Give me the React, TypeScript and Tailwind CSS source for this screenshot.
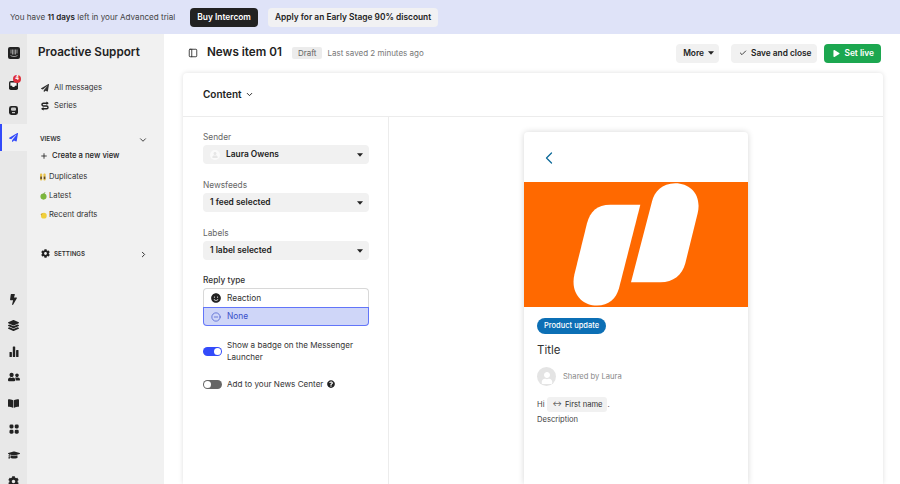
import { Check, ChevronDown, ChevronLeft, ChevronRight, CircleMinus, PanelLeft, Plus } from 'lucide-react';
import {
  FaBolt,
  FaBookOpen,
  FaCog,
  FaGraduationCap,
  FaLayerGroup,
  FaPaperPlane,
  FaPlay,
  FaQuestionCircle,
  FaSmile,
  FaUserFriends,
  FaUser,
} from 'react-icons/fa';

function BarsIcon() {
  return (
    <svg width="10" height="11" viewBox="0 0 10 11" fill="#222">
      <rect x="0.5" y="6" width="2.4" height="5" rx="0.6" />
      <rect x="3.8" y="0.5" width="2.4" height="10.5" rx="0.6" />
      <rect x="7.1" y="4" width="2.4" height="7" rx="0.6" />
    </svg>
  );
}

function DotsIcon() {
  return (
    <svg width="10" height="10" viewBox="0 0 10 10" fill="#222">
      <rect x="0.5" y="0.5" width="4" height="4" rx="1.4" />
      <rect x="5.7" y="0.5" width="4" height="4" rx="1.4" />
      <rect x="0.5" y="5.7" width="4" height="4" rx="1.4" />
      <rect x="5.7" y="5.7" width="4" height="4" rx="1.4" />
    </svg>
  );
}

const railBottom = [
  <FaBolt size={11} />,
  <FaLayerGroup size={11} />,
  <BarsIcon />,
  <FaUserFriends size={12} />,
  <FaBookOpen size={11} />,
  <DotsIcon />,
  <FaGraduationCap size={12} />,
  <FaCog size={11} />,
];

function Caret() {
  return (
    <svg width="6" height="4" viewBox="0 0 6 4" className="shrink-0">
      <path d="M0 .3h6L3 3.7z" fill="#222" />
    </svg>
  );
}

function Select({ label, value, avatar }: { label: string; value: string; avatar?: boolean }) {
  return (
    <div className="flex flex-col gap-[2px]">
      <span className="text-[8.3px] leading-[12px] text-[#666]">{label}</span>
      <div className="flex h-[19px] items-center rounded-[4px] bg-[#f1f1f1] pl-[7px] pr-[6px]">
        {avatar && (
          <span className="mr-[6px] flex h-[10px] w-[10px] items-center justify-center rounded-full bg-[#fafafa]">
            <FaUser size={6} className="text-[#e6e6e6]" />
          </span>
        )}
        <span className="flex-1 text-[8.4px] font-semibold text-[#222]">{value}</span>
        <Caret />
      </div>
    </div>
  );
}

function SeriesIcon() {
  return (
    <svg width="8" height="10" viewBox="0 0 10 11" fill="none" stroke="#222" strokeWidth="1.8">
      <path d="M8.5 2H3a1.7 1.7 0 0 0 0 3.5h4A1.7 1.7 0 0 1 7 9H1" />
      <path d="M7 .3 9.3 2 7 3.7zM3 7.3.7 9 3 10.7z" fill="#222" strokeWidth="0.5" />
    </svg>
  );
}

function ViewEmoji({ kind }: { kind: 'duo' | 'apple' | 'lemon' }) {
  if (kind === 'duo') {
    return (
      <svg width="6" height="8" viewBox="0 0 7 9">
        <rect x="0" y="0.5" width="2.6" height="8" rx="1" fill="#e8c24a" />
        <rect x="4" y="0.5" width="2.6" height="8" rx="1" fill="#e8c24a" />
        <rect x="0.4" y="4" width="1.8" height="3" fill="#5b4630" />
        <rect x="4.4" y="4" width="1.8" height="3" fill="#5b4630" />
      </svg>
    );
  }
  if (kind === 'apple') {
    return (
      <svg width="7" height="8" viewBox="0 0 8 9">
        <circle cx="4" cy="5.2" r="3.5" fill="#7bb63c" />
        <path d="M4 2 6 .5" stroke="#5d8a2c" strokeWidth="1" />
      </svg>
    );
  }
  return (
    <svg width="7" height="7" viewBox="0 0 8 8">
      <circle cx="4.4" cy="4.2" r="3.3" fill="#f0cf3c" />
      <path d="M.5 2.5 3 1 2 4z" fill="#c9a336" />
    </svg>
  );
}

export default function App() {
  return (
    <div className="flex h-[484px] w-[900px] flex-col overflow-hidden bg-white font-['Inter',sans-serif] text-[#222]">
      <div className="flex h-[34px] shrink-0 items-center bg-[#dfe3f8] pl-[10px]">
        <span className="text-[8.1px] text-[#444]">
          You have <b className="font-semibold text-[#222]">11 days</b> left in your Advanced trial
        </span>
        <span className="ml-[15px] flex h-[19px] items-center rounded-[4px] bg-[#222] px-[7px] text-[8.4px] font-semibold text-white">
          Buy Intercom
        </span>
        <span className="ml-[10px] flex h-[19px] items-center rounded-[4px] bg-[#f1f1f3] px-[7px] text-[8.4px] font-semibold text-[#222]">
          Apply for an Early Stage 90% discount
        </span>
      </div>

      <div className="flex min-h-0 flex-1">
        <div className="flex w-[27px] shrink-0 flex-col items-center bg-[#e8e8e8]">
          <svg width="12" height="12" viewBox="0 0 12 12" className="mt-[13px] shrink-0">
            <rect width="12" height="12" rx="2" fill="#222" />
            <path d="M3 2.5v4M4.5 2.5v5M6 2.5v5M7.5 2.5v5M9 2.5v4M2.5 8.5c2 1.4 5 1.4 7 0" stroke="#e8e8e8" strokeWidth=".6" fill="none" />
          </svg>
          <div className="relative mt-[22px] shrink-0">
            <svg width="9" height="9" viewBox="0 0 9 9" className="block">
              <rect x="0" y="0" width="9" height="9" rx="1.8" fill="#222" />
              <path d="M1.4 1.4h6.2v3.4H6L5.4 6H3.6L3 4.8H1.4z" fill="#f4f4f4" />
            </svg>
            <span className="absolute -right-[3px] -top-[6px] flex h-[8px] w-[8px] items-center justify-center rounded-full bg-[#dc2f3c] text-[5.5px] font-bold leading-none text-white">
              4
            </span>
          </div>
          <svg width="9" height="9" viewBox="0 0 9 9" className="mt-[16px] shrink-0">
            <rect width="9" height="9" rx="2.4" fill="#222" />
            <rect x="2" y="1.6" width="5" height="3.2" rx="1.2" fill="#c9c9c9" />
            <rect x="3" y="6" width="3" height="1.2" fill="#c9c9c9" />
          </svg>
          <div className="mt-[9px] flex h-[27px] w-full shrink-0 items-center justify-center border-l-2 border-[#334bfa] bg-[#f1f1f1] pr-[2px]">
            <FaPaperPlane size={9} className="text-[#334bfa]" />
          </div>
          <div className="mt-[135px] flex shrink-0 flex-col items-center">
            {railBottom.map((icon, i) => (
              <div key={i} className="flex h-[26px] items-center justify-center text-[#222]">
                {icon}
              </div>
            ))}
          </div>
        </div>

        <aside className="w-[137px] shrink-0 bg-[#f1f1f1] pl-[11px] pr-[15px]">
          <h1 className="mt-[10px] whitespace-nowrap text-[11.7px] font-semibold leading-[16px] text-[#222]">Proactive Support</h1>
          <div className="mt-[21px] flex flex-col gap-[4px] pl-[3px]">
            <div className="flex h-[14px] items-center gap-[5px] text-[7.7px] text-[#333]">
              <FaPaperPlane size={8} className="w-[8px] shrink-0" />
              All messages
            </div>
            <div className="flex h-[14px] items-center gap-[5px] text-[7.7px] text-[#333]">
              <SeriesIcon />
              Series
            </div>
          </div>
          <div className="mt-[21px] flex h-[12px] items-center justify-between pl-[2px]">
            <span className="text-[6.3px] font-semibold text-[#333]">VIEWS</span>
            <ChevronDown size={10} strokeWidth={2} className="mr-[1px]" />
          </div>
          <div className="mt-[4px] flex h-[12px] items-center gap-[4px] pl-[2px] text-[7.7px] font-medium text-[#222]">
            <Plus size={8} strokeWidth={2.5} />
            Create a new view
          </div>
          <div className="mt-[9px] flex flex-col gap-[7px] pl-[2px] text-[7.7px] text-[#333]">
            <div className="flex h-[12px] items-center">
              <span className="flex w-[9px] shrink-0">
                <ViewEmoji kind="duo" />
              </span>
              Duplicates
            </div>
            <div className="flex h-[12px] items-center">
              <span className="flex w-[9px] shrink-0">
                <ViewEmoji kind="apple" />
              </span>
              Latest
            </div>
            <div className="flex h-[12px] items-center">
              <span className="flex w-[9px] shrink-0">
                <ViewEmoji kind="lemon" />
              </span>
              Recent drafts
            </div>
          </div>
          <div className="mt-[27px] flex h-[12px] items-center justify-between pl-[3px]">
            <span className="flex items-center gap-[4px] text-[6.2px] font-semibold text-[#333]">
              <FaCog size={9} className="text-[#222]" />
              SETTINGS
            </span>
            <ChevronRight size={9} strokeWidth={2.5} className="mr-[1px]" />
          </div>
        </aside>

        <main className="flex min-w-0 flex-1 flex-col">
          <header className="flex h-[39px] shrink-0 items-center pb-[1px] pl-[24px] pr-[19px]">
            <PanelLeft size={10} strokeWidth={2} />
            <h2 className="ml-[9px] text-[11.7px] font-semibold text-[#222]">News item 01</h2>
            <span className="ml-[10px] flex h-[12px] items-center rounded-[2px] bg-[#ececec] px-[6px] text-[8px] text-[#666]">
              Draft
            </span>
            <span className="ml-[5px] text-[8px] text-[#777]">Last saved 2 minutes ago</span>
            <button className="ml-auto flex h-[19px] items-center gap-[4px] rounded-[4px] bg-[#f1f1f1] pl-[7px] pr-[5px] text-[8.4px] font-semibold">
              More
              <Caret />
            </button>
            <button className="ml-[12px] flex h-[19px] items-center gap-[4px] rounded-[4px] bg-[#f1f1f1] pl-[8px] pr-[6px] text-[8.3px] font-semibold">
              <Check size={8} strokeWidth={2.5} />
              Save and close
            </button>
            <button className="ml-[7px] flex h-[19px] items-center gap-[4px] rounded-[4px] bg-[#1ca750] pl-[9px] pr-[7px] text-[8.4px] font-semibold text-white">
              <FaPlay size={7} />
              Set live
            </button>
          </header>

          <section className="ml-[19px] flex min-h-0 w-[700px] flex-1 flex-col rounded-t-[4px] bg-white shadow-[0_0_5px_rgba(0,0,0,0.13)]">
            <div className="flex h-[44px] shrink-0 items-center gap-[3px] border-b border-[#ececec] pl-[20px] text-[10px] font-semibold">
              Content
              <ChevronDown size={9} strokeWidth={2.5} />
            </div>
            <div className="flex min-h-0 flex-1">
              <div className="flex w-[206px] shrink-0 flex-col border-r border-[#ececec] pl-[20px] pr-[19px] pt-[14px]">
                <div className="flex flex-col gap-[15px]">
                  <Select label="Sender" value="Laura Owens" avatar />
                  <Select label="Newsfeeds" value="1 feed selected" />
                  <Select label="Labels" value="1 label selected" />
                </div>
                <span className="mt-[14px] text-[8.3px] font-medium leading-[12px] text-[#333]">Reply type</span>
                <div className="mt-[2px] flex flex-col">
                  <div className="flex h-[19px] items-center gap-[6px] rounded-t-[4px] border border-b-0 border-[#d8d8d8] pl-[7px] text-[8.3px] text-[#333]">
                    <FaSmile size={10} className="text-[#222]" />
                    Reaction
                  </div>
                  <div className="flex h-[19px] items-center gap-[6px] rounded-b-[4px] border border-[#334bfa]/70 bg-[#cfd6f8] pl-[7px] text-[8.3px] text-[#3a4fc8]">
                    <CircleMinus size={10} strokeWidth={1.6} />
                    None
                  </div>
                </div>
                <div className="mt-[13px] flex items-center gap-[5px]">
                  <span className="flex h-[9px] w-[19px] shrink-0 items-center justify-end rounded-full bg-[#334bfa] pr-[1px]">
                    <span className="h-[7px] w-[7px] rounded-full bg-white" />
                  </span>
                  <span className="text-[8.1px] leading-[12px] text-[#333]">Show a badge on the Messenger Launcher</span>
                </div>
                <div className="mt-[15px] flex items-center gap-[5px]">
                  <span className="flex h-[9px] w-[19px] shrink-0 items-center rounded-full bg-[#666] pl-[1px]">
                    <span className="h-[7px] w-[7px] rounded-full bg-white" />
                  </span>
                  <span className="text-[8.1px] leading-[12px] text-[#333]">Add to your News Center</span>
                  <FaQuestionCircle size={8} className="-ml-[1px] text-[#222]" />
                </div>
              </div>

              <div className="flex min-w-0 flex-1 justify-center pt-[15px]">
                <div className="flex w-[224px] flex-col rounded-t-[4px] bg-white shadow-[0_0_6px_rgba(0,0,0,0.16)]">
                  <div className="flex h-[50px] shrink-0 items-center pl-[15px] pt-[2px]">
                    <ChevronLeft size={20} strokeWidth={1.5} className="text-[#0c6a99]" />
                  </div>
                  <svg viewBox="41 187 672 374" className="h-[125px] w-[224px] shrink-0 bg-[#ff6900]">
                    <g fill="#fff" className="blur-[2px]">
                      <path d="M390 255H300C260 255 240 275 230 310L192 465C180 520 215 557 260 557C295 557 318 535 326 505Z" />
                      <path d="M362 487H450C490 487 515 465 525 430L562 280C575 225 540 190 495 190C455 190 432 215 425 245Z" />
                    </g>
                  </svg>
                  <div className="px-[13px] pt-[11px]">
                    <span className="flex h-[16px] w-fit items-center rounded-full bg-[#0c6fb5] px-[7px] text-[7.5px] font-medium text-white">
                      Product update
                    </span>
                    <div className="mt-[9px] text-[11.5px] leading-[15px] text-[#333]">Title</div>
                    <div className="mt-[9px] flex items-center gap-[7px]">
                      <span className="flex h-[19px] w-[19px] items-center justify-center overflow-hidden rounded-full bg-[#e4e4e4]">
                        <FaUser size={12} className="mt-[3px] text-white" />
                      </span>
                      <span className="text-[7.6px] text-[#888]">Shared by Laura</span>
                    </div>
                    <div className="mt-[11px] flex items-center text-[7.6px] text-[#444]">
                      Hi
                      <span className="ml-[3px] flex h-[15px] items-center gap-[3px] rounded-[3px] bg-[#f1f1f1] pl-[5px] pr-[4px] text-[#333]">
                        <span className="text-[7px]">↔</span>
                        First name
                      </span>
                      <span className="ml-[1px]">.</span>
                    </div>
                    <div className="mt-[1px] text-[7.6px] leading-[13px] text-[#444]">Description</div>
                  </div>
                </div>
              </div>
            </div>
          </section>
        </main>
      </div>
    </div>
  );
}
